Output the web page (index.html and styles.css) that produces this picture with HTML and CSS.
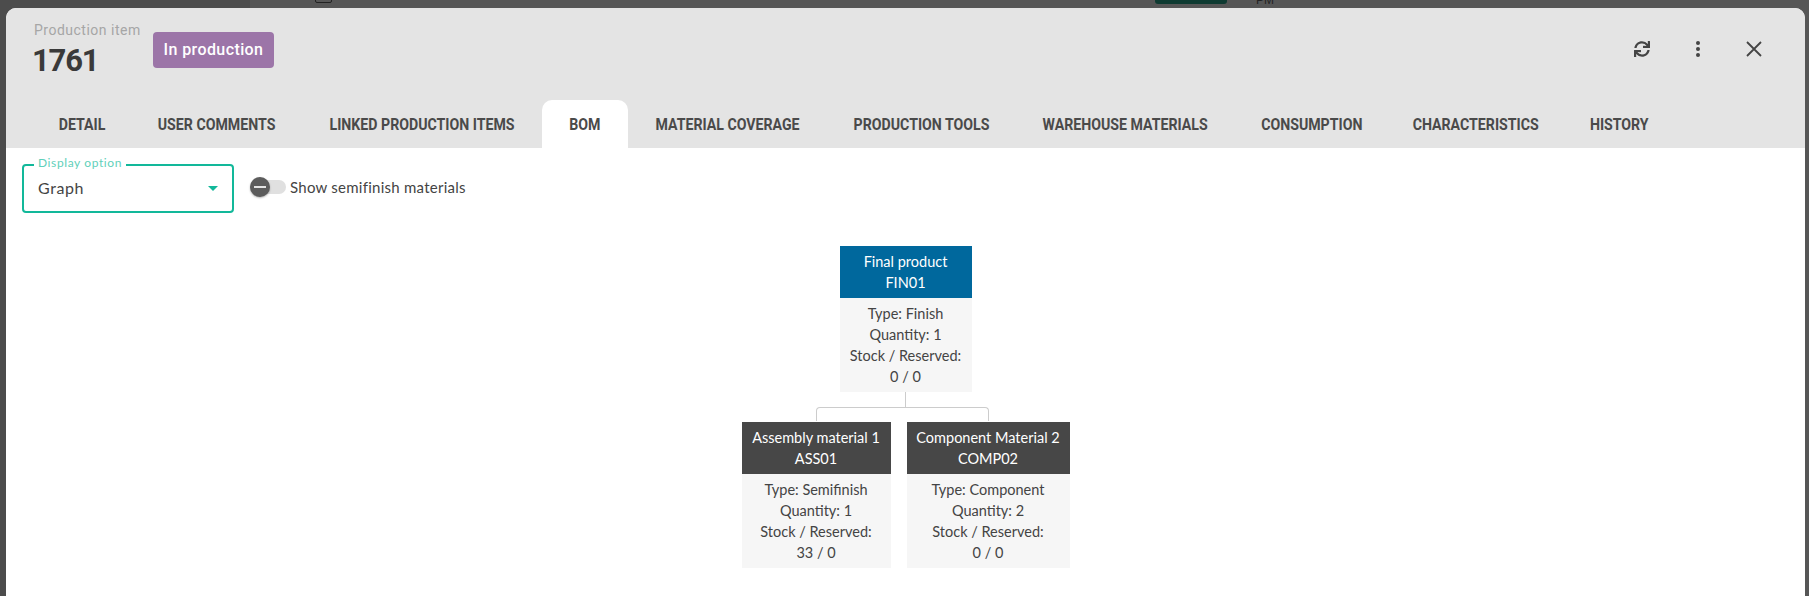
FILE: index.html
```html
<!DOCTYPE html>
<html lang="en">
<head>
<meta charset="utf-8">
<title>Production item 1761</title>
<link rel="stylesheet" href="styles.css">
</head>
<body>
<div class="backdrop-side"></div>
<div class="backdrop-box"></div>
<div class="backdrop-button"></div>
<div class="backdrop-pm">PM</div>
<main class="modal">
  <header class="modal-head">
    <div class="head-row">
      <div class="title">
        <div class="title-label">Production item</div>
        <div class="title-number">1761</div>
      </div>
      <div class="badge">In production</div>
      <div class="actions">
        <button class="icon-btn" aria-label="Refresh">
          <svg class="icon-sync" viewBox="0 0 512 512"><path d="M440.65 12.57l4 82.77A247.16 247.16 0 0 0 255.83 8C134.73 8 33.91 94.92 12.29 209.82A12 12 0 0 0 24.09 224h49.05a12 12 0 0 0 11.67-9.26 175.91 175.91 0 0 1 317-56.94l-101.46-4.86a12 12 0 0 0-12.57 12v47.41a12 12 0 0 0 12 12H500a12 12 0 0 0 12-12V12a12 12 0 0 0-12-12h-47.37a12 12 0 0 0-11.98 12.57zM255.83 432a175.61 175.61 0 0 1-146-77.8l101.8 4.87a12 12 0 0 0 12.57-12v-47.4a12 12 0 0 0-12-12H12a12 12 0 0 0-12 12V500a12 12 0 0 0 12 12h47.35a12 12 0 0 0 12-12.6l-4.15-82.57A247.17 247.17 0 0 0 255.83 504c121.11 0 221.93-86.92 243.55-201.82a12 12 0 0 0-11.8-14.18h-49.05a12 12 0 0 0-11.67 9.26A175.86 175.86 0 0 1 255.83 432z"/></svg>
        </button>
        <button class="icon-btn" aria-label="More">
          <svg class="icon-dots" viewBox="0 0 6 16"><circle cx="3" cy="2" r="2"/><circle cx="3" cy="8" r="2"/><circle cx="3" cy="14" r="2"/></svg>
        </button>
        <button class="icon-btn" aria-label="Close">
          <svg class="icon-close" viewBox="0 0 16 16"><path d="M1 1l14 14M15 1L1 15"/></svg>
        </button>
      </div>
    </div>
    <nav class="tabs">
      <div class="tab"><span class="tab-text">DETAIL</span></div>
      <div class="tab"><span class="tab-text">USER COMMENTS</span></div>
      <div class="tab"><span class="tab-text">LINKED PRODUCTION ITEMS</span></div>
      <div class="tab tab-active"><span class="tab-text">BOM</span></div>
      <div class="tab"><span class="tab-text">MATERIAL COVERAGE</span></div>
      <div class="tab"><span class="tab-text">PRODUCTION TOOLS</span></div>
      <div class="tab"><span class="tab-text">WAREHOUSE MATERIALS</span></div>
      <div class="tab"><span class="tab-text">CONSUMPTION</span></div>
      <div class="tab"><span class="tab-text">CHARACTERISTICS</span></div>
      <div class="tab"><span class="tab-text">HISTORY</span></div>
    </nav>
  </header>
  <section class="content">
    <div class="filters">
      <div class="select">
        <span class="select-legend">Display option</span>
        <span class="select-value">Graph</span>
        <span class="select-arrow"></span>
      </div>
      <div class="toggle">
        <span class="toggle-track"><span class="toggle-thumb"></span></span>
        <span class="toggle-label">Show semifinish materials</span>
      </div>
    </div>
    <div class="tree">
      <article class="node node-final">
        <div class="node-head head-blue">Final product<br>FIN01</div>
        <div class="node-body">Type: Finish<br>Quantity: 1<br>Stock / Reserved:<br>0 / 0</div>
      </article>
      <div class="stem"></div>
      <div class="branch"></div>
      <div class="children">
        <article class="node node-assembly">
          <div class="node-head head-dark">Assembly material 1<br>ASS01</div>
          <div class="node-body">Type: Semifinish<br>Quantity: 1<br>Stock / Reserved:<br>33 / 0</div>
        </article>
        <article class="node node-component">
          <div class="node-head head-dark">Component Material 2<br>COMP02</div>
          <div class="node-body">Type: Component<br>Quantity: 2<br>Stock / Reserved:<br>0 / 0</div>
        </article>
      </div>
    </div>
  </section>
</main>
</body>
</html>
```

FILE: styles.css
```css
* { box-sizing: border-box; }
html, body { height: 100%; }
body {
  margin: 0;
  padding: 8px 4px 0 6px;
  background: #565656;
  overflow: hidden;
  font-family: "Lato", "Roboto", sans-serif;
  color: #444;
}
.backdrop-side { position: absolute; left: 0; top: 0; width: 250px; height: 100%; background: #4c4c4c; }
.backdrop-box { position: absolute; left: 315px; top: -4px; width: 17px; height: 7px; border: 1px solid #222; border-radius: 2px; }
.backdrop-button { position: absolute; left: 1155px; top: -4px; width: 72px; height: 8px; background: #0e3a31; border-radius: 3px; }
.backdrop-pm { position: absolute; left: 1256px; top: -6px; font: 12px/12px "Liberation Sans", sans-serif; color: #222; }

.modal {
  position: relative;
  height: 100%;
  background: #fff;
  border-radius: 10px 10px 0 0;
  overflow: hidden;
}
.modal-head { background: #e4e4e4; height: 140px; display: flex; flex-direction: column; }
.head-row { display: flex; align-items: flex-start; height: 92px; padding-left: 28px; padding-right: 23px; }
.title { width: 119px; padding-top: 12px; }
.title-label { font-family: "Roboto", sans-serif; font-size: 14px; line-height: 20px; color: #a6a6a6; letter-spacing: .5px; }
.title-number {
  margin: 1px 0 0 -2px;
  font-family: "Roboto", sans-serif;
  font-weight: 700;
  font-size: 31px;
  line-height: 40px;
  color: #3a3a3a;
  letter-spacing: -1.2px;
}
.badge {
  margin-top: 24px;
  width: 121px;
  height: 36px;
  border-radius: 4px;
  background: #9c75a8;
  color: #fff;
  font-family: "Roboto", sans-serif;
  font-weight: 500;
  font-size: 16px;
  line-height: 36px;
  letter-spacing: .4px;
  text-align: center;
}
.actions { margin-left: auto; margin-top: 13px; display: flex; }
.icon-btn { width: 56px; height: 56px; border: 0; padding: 0; background: none; display: flex; align-items: center; justify-content: center; }
.icon-sync { width: 16px; height: 16px; fill: #444; }
.icon-dots { width: 6px; height: 16px; fill: #444; }
.icon-close { width: 16px; height: 16px; fill: none; stroke: #444; stroke-width: 1.8; }

.tabs {
  display: grid;
  grid-template-columns: 99.5px 170.5px 240px 86px 199.5px 187.5px 221px 151.5px 176.5px 111px;
  margin-left: 26px;
  height: 48px;
}
.tab {
  display: flex;
  align-items: center;
  justify-content: center;
  font-family: "Roboto", sans-serif;
  font-weight: 700;
  font-size: 17px;
  color: #4a4a4a;
  white-space: nowrap;
}
.tab-text { display: inline-block; transform: scaleX(.833); }
.tab-active { background: #fff; border-radius: 10px 10px 0 0; }

.content { padding: 16px 16px 0; }
.filters { display: flex; align-items: flex-start; }
.select {
  position: relative;
  width: 212px;
  height: 49px;
  border: 2px solid #12b89a;
  border-radius: 4px;
  display: flex;
  align-items: center;
  padding-left: 14px;
}
.select-legend {
  position: absolute;
  left: 10px;
  top: -10px;
  padding: 0 4px;
  background: #fff;
  font-size: 12px;
  line-height: 14px;
  color: #5fd0ba;
  letter-spacing: .6px;
}
.select-value { font-size: 16px; color: #444; letter-spacing: .6px; margin-top: -2px; }
.select-arrow {
  position: absolute;
  right: 14px;
  top: 20px;
  border-left: 5px solid transparent;
  border-right: 5px solid transparent;
  border-top: 5px solid #12b89a;
}
.toggle { display: flex; align-items: center; margin: 13px 0 0 16px; height: 20px; }
.toggle-track { position: relative; width: 36px; height: 14px; border-radius: 7px; background: #e0e0e0; }
.toggle-thumb {
  position: absolute;
  left: 0;
  top: -3px;
  width: 20px;
  height: 20px;
  border-radius: 50%;
  background: #5c5c5c;
  box-shadow: 0 1px 2px rgba(0, 0, 0, .3);
}
.toggle-thumb::after {
  content: "";
  position: absolute;
  left: 4px;
  top: 9px;
  width: 12px;
  height: 2px;
  background: #e4e4e4;
}
.toggle-label { margin-left: 4px; font-size: 15px; color: #444; letter-spacing: .25px; }

.tree { display: flex; flex-direction: column; align-items: center; margin-top: 33px; }
.node { text-align: center; font-size: 14.5px; line-height: 21px; }
.node-final { width: 132px; }
.node-assembly { width: 149px; }
.node-component { width: 163px; }
.node-head { height: 52px; padding-top: 5px; color: #fff; }
.head-blue { background: #00689d; }
.head-dark { background: #474747; }
.node-body { height: 94px; padding-top: 5px; background: #f6f6f6; color: #444; }
.stem { width: 1px; height: 15px; background: #ccc; }
.branch { width: 173px; height: 14px; border: 1px solid #ccc; border-bottom: 0; border-radius: 4px 4px 0 0; margin: 0 7px 1px 0; }
.children { display: flex; gap: 16px; }
```
